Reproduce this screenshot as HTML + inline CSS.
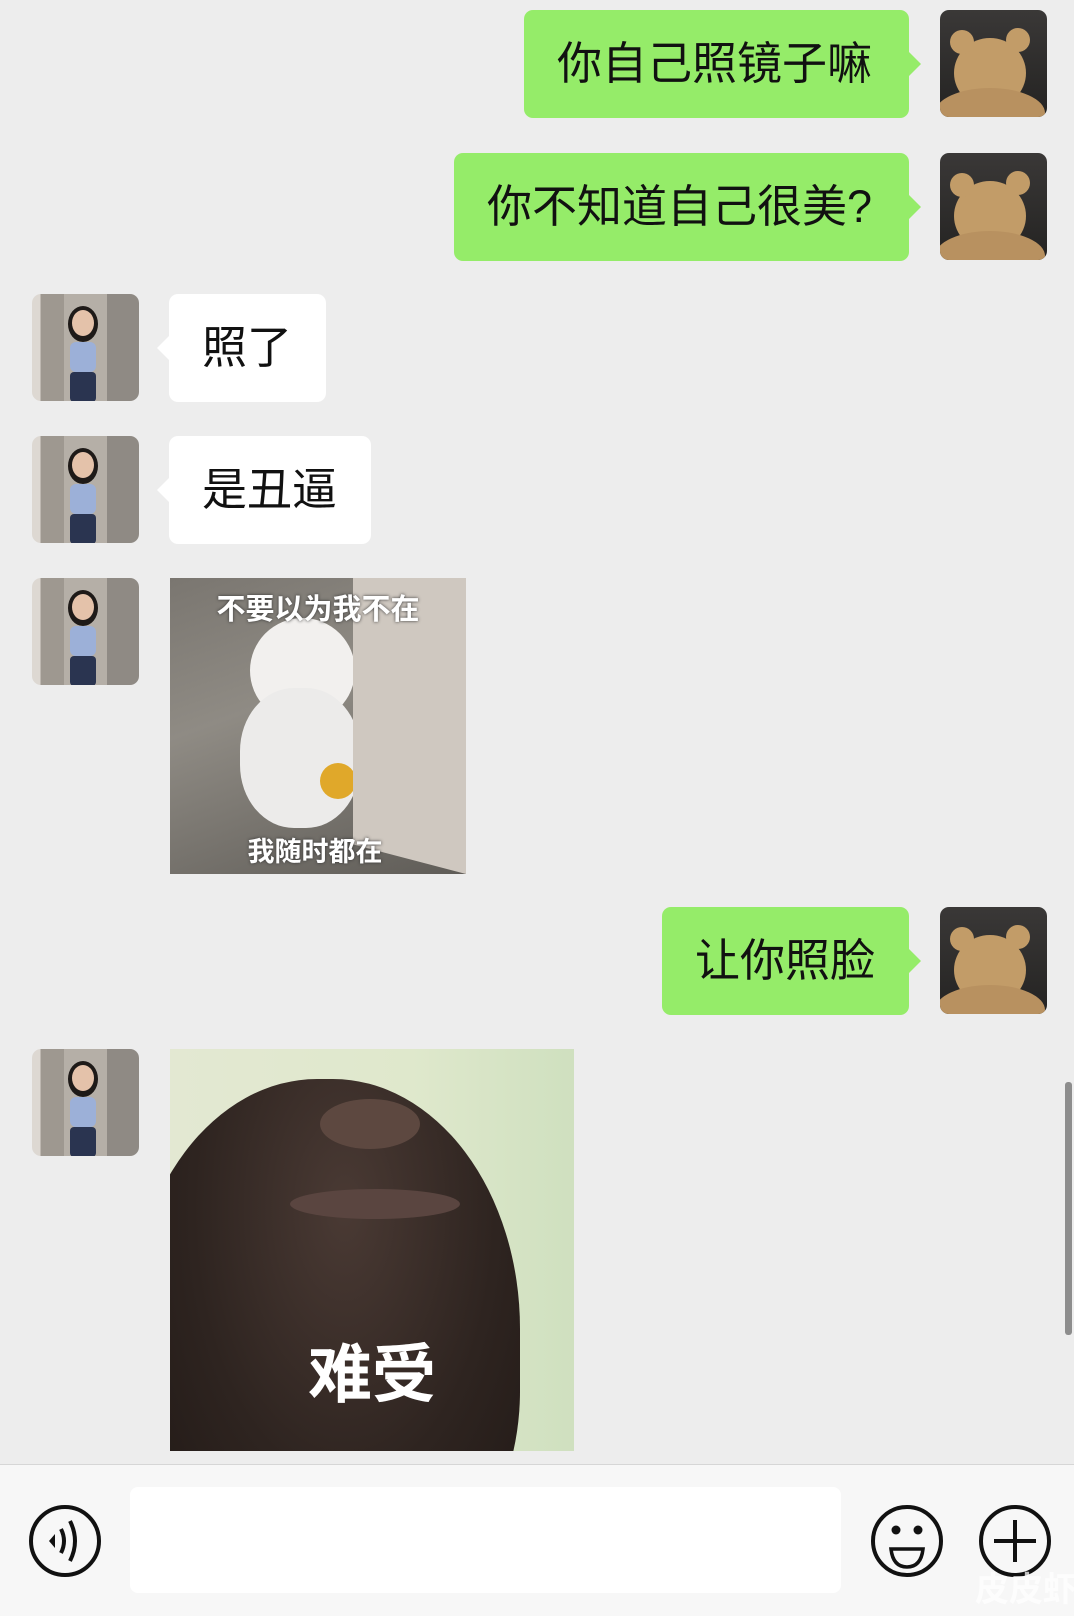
<!DOCTYPE html>
<html><head><meta charset="utf-8"><style>
*{margin:0;padding:0;box-sizing:border-box}
body{width:1074px;height:1616px;background:#ededed;position:relative;overflow:hidden;font-family:"Liberation Sans","Noto Sans CJK SC",sans-serif}
.a{position:absolute;width:107px;height:107px;border-radius:9px;overflow:hidden}
.bear{background:linear-gradient(#3a3837,#242322)}
.bear i{position:absolute;display:block;background:#c29c68;border-radius:50%}
.girl{background:linear-gradient(90deg,#ddd8d2 0 8%,#9e9890 8% 30%,#b5afa7 30% 70%,#8f8a84 70% 100%)}
.girl i{position:absolute;display:block;border-radius:50%}
.b{position:absolute;height:108px;border-radius:9px;font-size:45px;line-height:108px;color:#111;padding:0 33px;white-space:nowrap}
.g{background:#95ec69}
.w{background:#fff}
.g:after{content:"";position:absolute;right:-12px;top:42px;border:12px solid transparent;border-right:0;border-left-color:#95ec69}
.w:after{content:"";position:absolute;left:-12px;top:42px;border:12px solid transparent;border-left:0;border-right-color:#fff}
</style></head><body>

<div class="a bear" style="left:940px;top:10px"><i style="left:14px;top:28px;width:72px;height:70px"></i><i style="left:10px;top:20px;width:24px;height:24px"></i><i style="left:66px;top:18px;width:24px;height:24px"></i><i style="left:-5px;top:78px;width:110px;height:50px;background:#b89160"></i></div>
<div class="b g" style="left:524px;top:10px;width:385px">你自己照镜子嘛</div>

<div class="a bear" style="left:940px;top:153px"><i style="left:14px;top:28px;width:72px;height:70px"></i><i style="left:10px;top:20px;width:24px;height:24px"></i><i style="left:66px;top:18px;width:24px;height:24px"></i><i style="left:-5px;top:78px;width:110px;height:50px;background:#b89160"></i></div>
<div class="b g" style="left:454px;top:153px;width:455px">你不知道自己很美?</div>

<div class="a girl" style="left:32px;top:294px"><i style="left:36px;top:12px;width:30px;height:36px;background:#1e1a18"></i><i style="left:40px;top:16px;width:22px;height:26px;background:#e4c2aa"></i><i style="left:38px;top:48px;width:26px;height:30px;background:#9cb0d8;border-radius:6px"></i><i style="left:38px;top:78px;width:26px;height:30px;background:#2a3450;border-radius:4px"></i></div>
<div class="b w" style="left:169px;top:294px;width:157px">照了</div>

<div class="a girl" style="left:32px;top:436px"><i style="left:36px;top:12px;width:30px;height:36px;background:#1e1a18"></i><i style="left:40px;top:16px;width:22px;height:26px;background:#e4c2aa"></i><i style="left:38px;top:48px;width:26px;height:30px;background:#9cb0d8;border-radius:6px"></i><i style="left:38px;top:78px;width:26px;height:30px;background:#2a3450;border-radius:4px"></i></div>
<div class="b w" style="left:169px;top:436px;width:202px">是丑逼</div>

<div class="a girl" style="left:32px;top:578px"><i style="left:36px;top:12px;width:30px;height:36px;background:#1e1a18"></i><i style="left:40px;top:16px;width:22px;height:26px;background:#e4c2aa"></i><i style="left:38px;top:48px;width:26px;height:30px;background:#9cb0d8;border-radius:6px"></i><i style="left:38px;top:78px;width:26px;height:30px;background:#2a3450;border-radius:4px"></i></div>
<div style="position:absolute;left:170px;top:578px;width:296px;height:296px;overflow:hidden;background:linear-gradient(160deg,#7a7670,#8f8b84 40%,#5f5c57)">
 <div style="position:absolute;left:80px;top:40px;width:105px;height:105px;background:#f2f0ee;border-radius:50%"></div>
 <div style="position:absolute;left:70px;top:110px;width:120px;height:140px;background:#ecebea;border-radius:45%"></div>
 <div style="position:absolute;left:150px;top:185px;width:36px;height:36px;background:#e0a82a;border-radius:50%"></div>
 <div style="position:absolute;left:183px;top:0;width:113px;height:296px;background:#cfc8c0;clip-path:polygon(0 0,100% 0,100% 100%,0 90%)"></div>
 <div style="position:absolute;left:0;top:8px;width:296px;text-align:center;color:#fff;font-size:29px;font-weight:bold;text-shadow:0 0 3px #333">不要以为我不在</div>
 <div style="position:absolute;left:0;top:252px;width:290px;text-align:center;color:#fff;font-size:27px;font-weight:bold;text-shadow:0 0 3px #333">我随时都在</div>
</div>

<div class="a bear" style="left:940px;top:907px"><i style="left:14px;top:28px;width:72px;height:70px"></i><i style="left:10px;top:20px;width:24px;height:24px"></i><i style="left:66px;top:18px;width:24px;height:24px"></i><i style="left:-5px;top:78px;width:110px;height:50px;background:#b89160"></i></div>
<div class="b g" style="left:662px;top:907px;width:247px">让你照脸</div>

<div class="a girl" style="left:32px;top:1049px"><i style="left:36px;top:12px;width:30px;height:36px;background:#1e1a18"></i><i style="left:40px;top:16px;width:22px;height:26px;background:#e4c2aa"></i><i style="left:38px;top:48px;width:26px;height:30px;background:#9cb0d8;border-radius:6px"></i><i style="left:38px;top:78px;width:26px;height:30px;background:#2a3450;border-radius:4px"></i></div>
<div style="position:absolute;left:170px;top:1049px;width:404px;height:402px;overflow:hidden;background:linear-gradient(90deg,#e3e8d2,#dfe8cc 60%,#cfe0bf)">
 <div style="position:absolute;left:-40px;top:30px;width:390px;height:520px;background:radial-gradient(ellipse at 55% 25%,#4a3a34,#2e2420 50%,#1c1512);border-radius:48% 48% 40% 40%"></div>
 <div style="position:absolute;left:150px;top:50px;width:100px;height:50px;background:#5d4840;border-radius:50%"></div>
 <div style="position:absolute;left:120px;top:140px;width:170px;height:30px;background:#5a4540;border-radius:50%"></div>
 <div style="position:absolute;left:0;top:275px;width:404px;text-align:center;color:#fff;font-size:64px;font-weight:bold">难受</div>
</div>

<div style="position:absolute;left:1065px;top:1082px;width:7px;height:253px;background:#8d8d8d;border-radius:3px"></div>

<div style="position:absolute;left:0;top:1464px;width:1074px;height:152px;background:#f7f7f7;border-top:1px solid #d6d6d6"></div>
<div style="position:absolute;left:130px;top:1487px;width:711px;height:106px;background:#fff;border-radius:8px"></div>
<svg style="position:absolute;left:0;top:1464px" width="1074" height="152">
 <g fill="none" stroke="#111" stroke-width="4">
  <circle cx="65" cy="77" r="34"/>
  <path d="M61 65 Q67 77 61 89"/><path d="M70 57 Q80 77 70 97"/>
  <circle cx="907" cy="77" r="34"/>
  <circle cx="1015" cy="77" r="34"/>
  <path d="M1015 56V98M994 77H1036"/>
  <path d="M891 85H923Q921 103 907 103Q893 103 891 85Z" stroke-width="3.5"/>
 </g>
 <path d="M49 77l6-7v14z" fill="#111"/>
 <circle cx="896" cy="66" r="4.5" fill="#111"/><circle cx="918" cy="66" r="4.5" fill="#111"/>
 <text x="975" y="137" font-size="34" fill="#fff" fill-opacity="0.75" font-family="Noto Sans CJK SC,sans-serif" font-weight="bold">皮皮虾</text>
</svg>
</body></html>
